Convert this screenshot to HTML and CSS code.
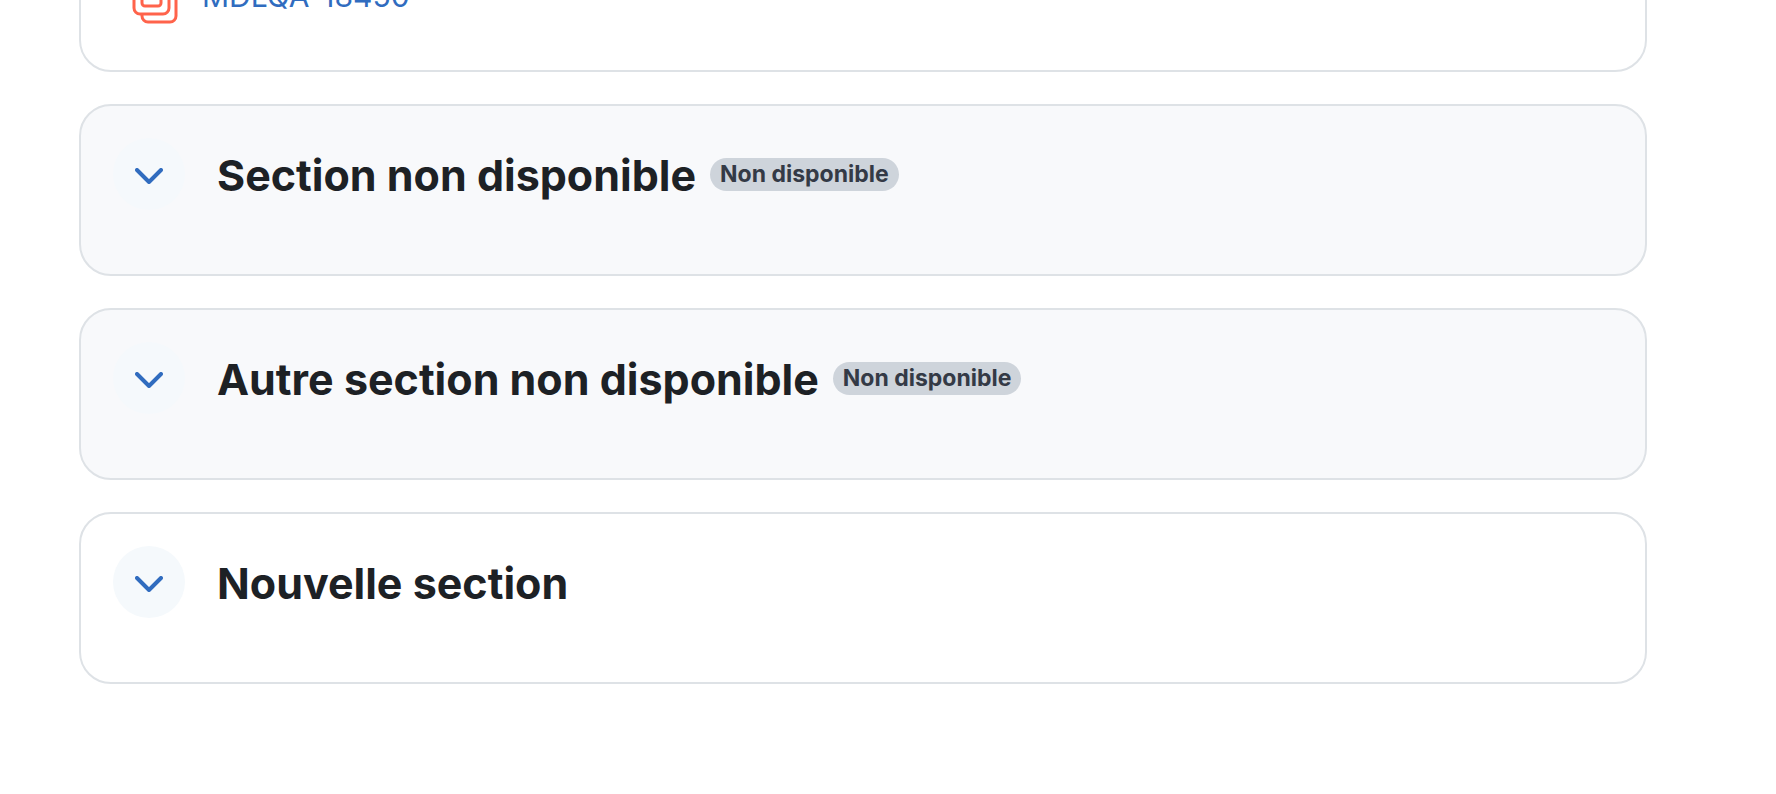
FILE: index.html
```html
<!DOCTYPE html>
<html lang="fr">
<head>
  <meta charset="UTF-8">
  <meta name="viewport" content="width=device-width, initial-scale=1.0">
  <title>Sections du cours</title>
  <link rel="stylesheet" href="styles.css">
</head>
<body>
  <main class="course">
    <section class="section section-activities">
      <div class="activity">
        <svg class="activity-icon" viewBox="0 0 48 48" aria-hidden="true">
          <rect x="2" y="2" width="35" height="36" rx="6"/>
          <rect x="10" y="10" width="19" height="20" rx="3"/>
          <path d="M10 38v2a6 6 0 0 0 6 6h22a6 6 0 0 0 6-6v-24a6 6 0 0 0-6-6h-1"/>
        </svg>
        <a class="activity-link" href="#">MDLQA-18450</a>
      </div>
    </section>

    <section class="section section-hidden">
      <div class="section-header">
        <button class="toggle" type="button" aria-label="Déplier Section non disponible">
          <svg class="chevron" viewBox="0 0 28 16" aria-hidden="true"><path d="M2 2l12 12L26 2"/></svg>
        </button>
        <h3 class="section-title">Section non disponible</h3>
        <span class="badge">Non disponible</span>
      </div>
    </section>

    <section class="section section-hidden">
      <div class="section-header">
        <button class="toggle" type="button" aria-label="Déplier Autre section non disponible">
          <svg class="chevron" viewBox="0 0 28 16" aria-hidden="true"><path d="M2 2l12 12L26 2"/></svg>
        </button>
        <h3 class="section-title">Autre section non disponible</h3>
        <span class="badge">Non disponible</span>
      </div>
    </section>

    <section class="section">
      <div class="section-header">
        <button class="toggle" type="button" aria-label="Déplier Nouvelle section">
          <svg class="chevron" viewBox="0 0 28 16" aria-hidden="true"><path d="M2 2l12 12L26 2"/></svg>
        </button>
        <h3 class="section-title">Nouvelle section</h3>
      </div>
    </section>
  </main>
</body>
</html>
```
FILE: styles.css
```css
* {margin:0; padding:0; box-sizing:border-box;}
body{
  background: #fff;
  color: #1d2125;
  font-family: Inter, "Liberation Sans", sans-serif;
  overflow-x: hidden;
}
.course{
  display: flex;
  flex-direction: column;
  gap: 32px;
  margin: -58px 129px 0 79px;
}
.section{
  padding: 32px 32px 64px;
  border: 2px solid #dee2e6;
  border-radius: 32px;
}
.section-hidden{background: #f8f9fb;}
.section-header{
  display: flex;
  align-items: center;
}
.section-title{
  margin-left: 32px;
  padding-top: 2px;
  font-size: 43px;
  line-height: 56px;
  font-weight: 700;
}

/* activity row */
.section-activities{padding-bottom: 46px;}
.activity{
  display: flex;
  align-items: flex-start;
  gap: 22px;
  padding-left: 19px;
}
.activity-icon{
  width: 48px;
  height: 48px;
  fill: none;
  stroke: #ff634b;
  stroke-width: 3;
}
.activity-link{
  font-size: 30px;
  line-height: 40px;
  color: #306cbf;
  text-decoration: none;
}

/* collapse button */
.toggle{
  display: flex;
  align-items: center;
  justify-content: center;
  width: 72px;
  height: 72px;
  padding-top: 4px;
  border: 0;
  border-radius: 50%;
  background: #f5f9fc;
  cursor: pointer;
}
.chevron{
  width: 28px;
  height: 16px;
  fill: none;
  stroke: #306cbf;
  stroke-width: 4;
  stroke-linecap: round;
  stroke-linejoin: round;
}
.badge{
  margin-left: 14px;
  padding: 4px 10px;
  border-radius: 17px;
  background: #ced4db;
  color: #343a46;
  font-size: 23px;
  line-height: 25px;
  font-weight: 700;
}
```
